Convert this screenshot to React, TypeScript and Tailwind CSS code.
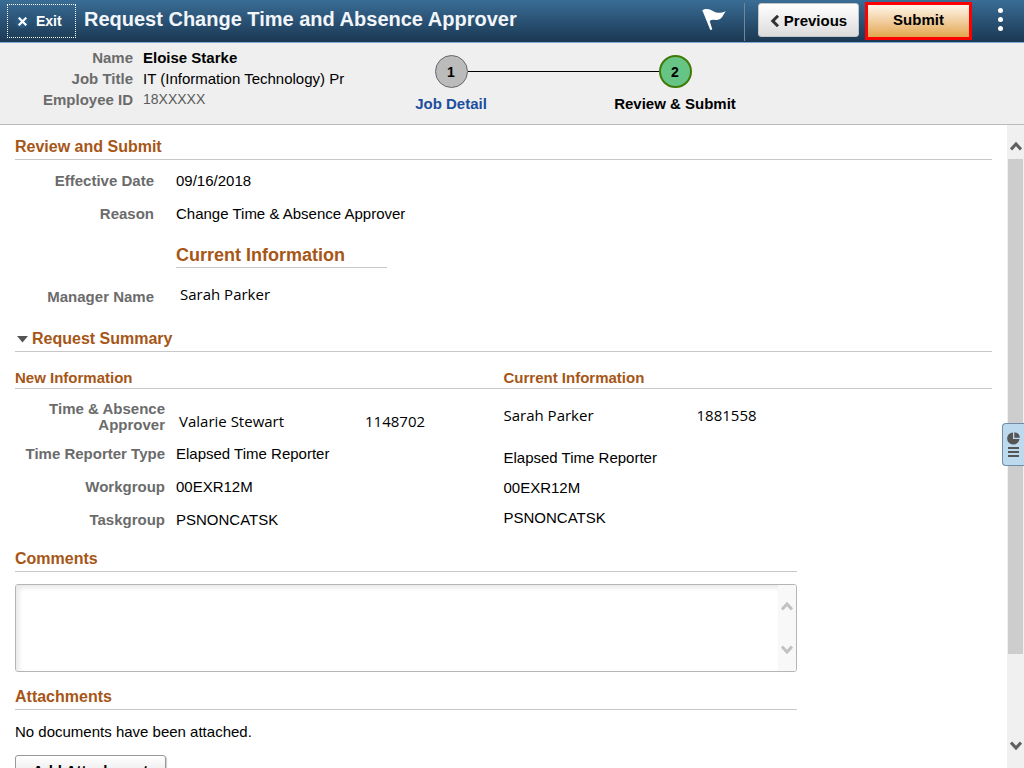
import React from 'react';

interface Row {
    label: string;
    value: string;
}

const newInfo: Row[] = [
    { label: 'Time Reporter Type', value: 'Elapsed Time Reporter' },
    { label: 'Workgroup', value: '00EXR12M' },
    { label: 'Taskgroup', value: 'PSNONCATSK' },
];

const heading = 'border-b border-[#c8c8c8] font-bold text-[#a65616]';
const label = 'text-right font-bold text-[#6b6b6b]';

const Chevron = ({ down, color }: { down?: boolean; color: string }) => (
    <svg width="12" height="10" viewBox="0 0 12 10" fill="none" stroke={color} strokeWidth="3" aria-hidden="true">
        {down ? <path d="M1 1.500l5 5.500 5-5.500" /> : <path d="M1 8.500L6 3l5 5.500" />}
    </svg>
);

const Header = () => (
    <header className="flex h-[43px] shrink-0 items-start border-b border-[#7fa9d1] bg-gradient-to-b from-[#3a6d96] to-[#1b3853] text-white">
        <button className="mt-1 ml-[7px] flex h-[34px] w-[69px] shrink-0 items-center border border-dotted border-white pl-[7px] text-sm font-bold">
            <span className="mr-[7px] flex size-[14px] items-center justify-center rounded-full bg-[#295a80]">
                <svg width="9" height="9" viewBox="0 0 9 9" stroke="white" strokeWidth="2.2" aria-hidden="true">
                    <path d="M0.7 0.7l7.6 7.6M8.3 0.7L0.7 8.3" />
                </svg>
            </span>
            Exit
        </button>
        <h1 className="ml-2 flex-1 text-xl leading-[38px] font-bold whitespace-nowrap text-[#f2f6fa]">
            Request Change Time and Absence Approver
        </h1>
        <button aria-label="Notifications" className="mt-2 mr-[18px]">
            <svg width="24" height="22" viewBox="0 0 24 22" fill="white" aria-hidden="true">
                <path d="M0.3 2.3C2.500 0.6 6 0.500 8.500 1.700c2.800 1.400 4.600 3 8 3 2.500 0 4.600-.3 7.400-1.500-1.500 1.700-2.200 3.400-3.600 5.600-1.700 2.500-4.300 3.600-7.300 3.200-2.200-.3-4-.1-5.300.9L10.300 21.600 8.300 22z" />
            </svg>
        </button>
        <div className="mt-[3px] h-[38px] w-px bg-[#70889d]" />
        <button className="mt-[3px] ml-[13px] flex h-[34px] w-[101px] items-center justify-center gap-1 rounded-[3px] border border-[#c5c5c5] bg-gradient-to-b from-white to-[#dcdcdc] pt-[2px] text-[15px] font-bold text-black">
            <svg width="10" height="12" viewBox="0 0 10 12" fill="none" stroke="#333" strokeWidth="3" aria-hidden="true">
                <path d="M8 0.800L2.800 6 8 11.200" />
            </svg>
            Previous
        </button>
        <button className="mt-[2px] ml-[6px] h-[38px] w-[107px] border-3 border-[#fe0000] bg-gradient-to-b from-[#fef6ea] to-[#e2a64a] pb-[2px] text-[15px] font-bold text-black">
            Submit
        </button>
        <button aria-label="Actions" className="mt-2 mr-5 ml-[26px] flex w-[6px] flex-col gap-[4px]">
            <span className="size-[5px] rounded-full bg-white" />
            <span className="size-[5px] rounded-full bg-white" />
            <span className="size-[5px] rounded-full bg-white" />
        </button>
    </header>
);

const Banner = () => (
    <section className="flex h-[82px] shrink-0 border-b border-[#bbb] bg-[#efefef]">
        <dl className="grid w-[386px] shrink-0 grid-cols-[133px_1fr] content-start gap-x-[10px] pt-1 leading-[21px]">
            <dt className={label}>Name</dt>
            <dd className="font-bold">Eloise Starke</dd>
            <dt className={label}>Job Title</dt>
            <dd>IT (Information Technology) Pr</dd>
            <dt className={label}>Employee ID</dt>
            <dd className="text-sm leading-[21px] text-[#5a5a5a]">18XXXXX</dd>
        </dl>
        <ol className="flex pt-3 text-center font-bold">
            <li className="w-[130px]">
                <div className="flex items-center">
                    <span className="flex-1" />
                    <span className="flex size-[33px] items-center justify-center rounded-full border border-[#666] bg-[#bbb] text-sm">1</span>
                    <span className="h-px flex-1 bg-black" />
                </div>
                <a href="#job-detail" className="mt-[6px] block leading-5 text-[#1d4e9e]">Job Detail</a>
            </li>
            <li aria-hidden="true" className="mt-4 h-px w-[94px] bg-black" />
            <li className="w-[130px]" aria-current="step">
                <div className="flex items-center">
                    <span className="h-px flex-1 bg-black" />
                    <span className="flex size-[33px] items-center justify-center rounded-full border-2 border-[#3f7a08] bg-[#66c585] text-sm">2</span>
                    <span className="flex-1" />
                </div>
                <span className="mt-[6px] block leading-5">Review &amp; Submit</span>
            </li>
        </ol>
    </section>
);

const Summary = () => (
    <section>
        <h2 className={`${heading} mt-5 text-base leading-6`}>
            <button className="flex items-center gap-1" aria-expanded="true">
                <svg width="13" height="7" viewBox="0 0 13 7" fill="#555" aria-hidden="true">
                    <path d="M2 0h11L7.500 6.500z" />
                </svg>
                Request Summary
            </button>
        </h2>
        <div className="mt-4 grid grid-cols-2">
            <h3 className={`${heading} leading-5`}>New Information</h3>
            <h3 className={`${heading} leading-5`}>Current Information</h3>
            <dl className="grid grid-cols-[150px_1fr] gap-x-[11px] gap-y-[13px] pt-3">
                <dt className={`${label} -mb-[2px] leading-4`}>Time &amp; Absence Approver</dt>
                <dd className="flex self-end pl-[3px] font-['Open_Sans','Noto_Sans',sans-serif]">
                    <span className="w-[186px]">Valarie Stewart</span>
                    <span>1148702</span>
                </dd>
                {newInfo.map((row) => (
                    <React.Fragment key={row.label}>
                        <dt className={label}>{row.label}</dt>
                        <dd>{row.value}</dd>
                    </React.Fragment>
                ))}
            </dl>
            <div className="flex flex-col gap-[10px] pt-4">
                <p className="mb-[13px] flex font-['Open_Sans','Noto_Sans',sans-serif]">
                    <span className="w-[193px]">Sarah Parker</span>
                    <span>1881558</span>
                </p>
                {newInfo.map((row) => (
                    <p key={row.label}>{row.value}</p>
                ))}
            </div>
        </div>
    </section>
);

const ScrollRail = () => (
    <div className="relative flex w-[17px] shrink-0 flex-col items-center bg-[#f0f0f0]">
        <button aria-label="Scroll up" className="flex h-[34px] shrink-0 items-center pt-2">
            <Chevron color="#606060" />
        </button>
        <div className="w-[15px] flex-[495] bg-[#cdcdcd]" />
        <div className="flex-[70]" />
        <button aria-label="Scroll down" className="flex h-11 shrink-0 items-center">
            <Chevron down color="#606060" />
        </button>
        <button
            aria-label="Related information"
            className="absolute top-[298px] right-0 flex h-[43px] w-[22px] flex-col items-center justify-center rounded-l-[4px] border border-r-0 border-[#6f8da6] bg-[#bcd9ee]"
        >
            <svg width="13" height="25" viewBox="0 0 13 25" fill="#555" aria-hidden="true">
                <path d="M6 0.500V7h6.500A6.200 6 0 1 1 6 0.500z" />
                <path d="M7.300 0.300A6 6 0 0 1 12.800 5.800H7.300z" />
                <path d="M1 15h11v2H1zM1 19h11v2H1zM1 23h11v2H1z" />
            </svg>
        </button>
    </div>
);

const App: React.FC = () => {
    return (
        <div className="flex h-screen flex-col overflow-hidden bg-white font-['Liberation_Sans',Arial,sans-serif] text-[15px] leading-5 text-black">
            <Header />
            <Banner />
            <div className="flex min-h-0 flex-1">
                <main className="min-w-0 flex-1 overflow-hidden px-[15px] pt-[10px]">
                    <h2 className={`${heading} text-base leading-6`}>Review and Submit</h2>
                    <dl className="mt-[11px] grid grid-cols-[139px_1fr] gap-x-[22px] gap-y-[13px]">
                        <dt className={label}>Effective Date</dt>
                        <dd>09/16/2018</dd>
                        <dt className={label}>Reason</dt>
                        <dd>Change Time &amp; Absence Approver</dd>
                    </dl>
                    <h3 className={`${heading} mt-[19px] ml-[161px] w-[211px] text-lg leading-6`}>Current Information</h3>
                    <dl className="mt-4 grid grid-cols-[139px_1fr] gap-x-[26px]">
                        <dt className={`${label} pt-[3px]`}>Manager Name</dt>
                        <dd className="font-['Open_Sans','Noto_Sans',sans-serif]">Sarah Parker</dd>
                    </dl>

                    <Summary />

                    <section className="w-4/5">
                        <h2 className={`${heading} mt-[17px] text-base leading-6`}>
                            <label htmlFor="comments">Comments</label>
                        </h2>
                        <div className="mt-3 flex h-[88px] overflow-hidden rounded-[3px] border border-[#b5b5b5]">
                            <textarea
                                id="comments"
                                className="min-w-0 flex-1 resize-none p-2 shadow-[inset_3px_3px_5px_#e8e8e8] outline-none"
                            />
                            <div className="flex w-[18px] flex-col items-center justify-between bg-[#f8f8f8] py-4">
                                <Chevron color="#c2c2c2" />
                                <Chevron down color="#c2c2c2" />
                            </div>
                        </div>
                        <h2 className={`${heading} mt-[13px] text-base leading-6`}>Attachments</h2>
                        <p className="mt-3">No documents have been attached.</p>
                        <button className="mt-[13px] h-[32px] w-[151px] rounded-[3px] border border-[#999] bg-gradient-to-b from-white to-[#ddd] font-bold shadow-[1px_1px_1px_#ccc]">
                            Add Attachment
                        </button>
                    </section>
                </main>
                <ScrollRail />
            </div>
        </div>
    );
};

export default App;
